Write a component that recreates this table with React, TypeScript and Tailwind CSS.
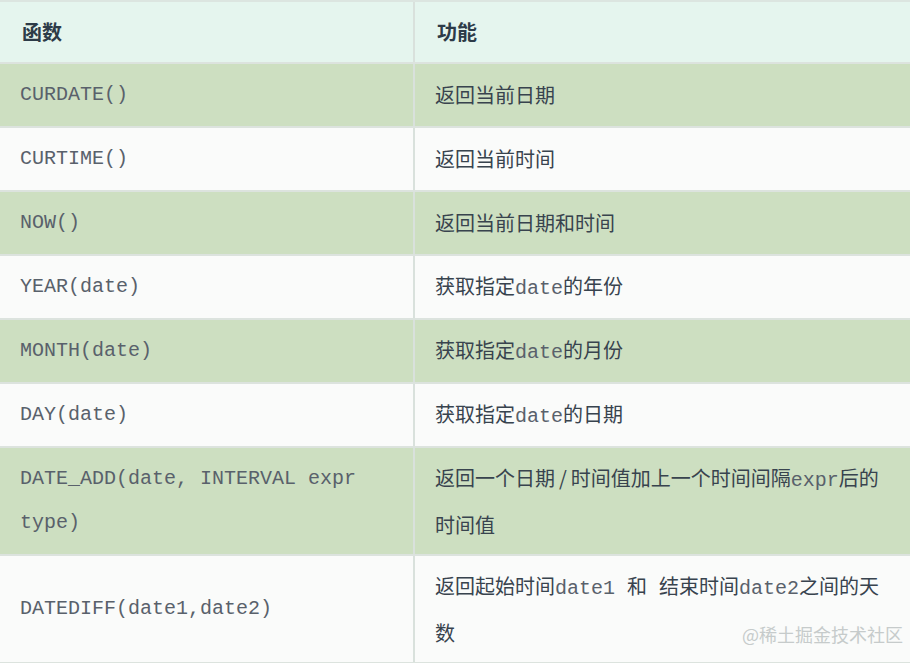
const mono = "font-['Liberation_Mono','Courier_New',monospace] text-[#59616b]";

type Row = {
  fn: string;
  desc: React.ReactNode;
  green: boolean;
  tall?: boolean;
};

const Code = ({ children }: { children: string }) => (
  <span className={mono + ' whitespace-pre'}>{children}</span>
);

const rows: Row[] = [
  { fn: 'CURDATE()', desc: '返回当前日期', green: true },
  { fn: 'CURTIME()', desc: '返回当前时间', green: false },
  { fn: 'NOW()', desc: '返回当前日期和时间', green: true },
  {
    fn: 'YEAR(date)',
    desc: (
      <>
        获取指定<Code>date</Code>的年份
      </>
    ),
    green: false,
  },
  {
    fn: 'MONTH(date)',
    desc: (
      <>
        获取指定<Code>date</Code>的月份
      </>
    ),
    green: true,
  },
  {
    fn: 'DAY(date)',
    desc: (
      <>
        获取指定<Code>date</Code>的日期
      </>
    ),
    green: false,
  },
  {
    fn: 'DATE_ADD(date, INTERVAL expr type)',
    desc: (
      <>
        返回一个日期<span className="px-[4px]">/</span>时间值加上一个时间间隔<Code>expr</Code>后的时间值
      </>
    ),
    green: true,
    tall: true,
  },
  {
    fn: 'DATEDIFF(date1,date2)',
    desc: (
      <>
        返回起始时间<Code>date1 </Code>和<Code> </Code>结束时间<Code>date2</Code>之间的天数
      </>
    ),
    green: false,
    tall: true,
  },
];

export default function App() {
  return (
    <div className="relative w-[910px] h-[663px] overflow-hidden bg-[#fafbfa] font-['Noto_Sans_CJK_SC','Noto_Sans',sans-serif] text-[20px] leading-[44px] text-[#38434e]">
      <div className="border-t-2 border-[#dce5e0]">
        <div className="flex h-[62px] border-b-2 border-[#dce3de] bg-[#e5f5ee] font-bold text-[#2d3b48]">
          <div className="w-[415px] shrink-0 border-r-2 border-[#d9e1dc] px-[22px] flex items-center">函数</div>
          <div className="flex-1 px-[22px] flex items-center">功能</div>
        </div>
        {rows.map((r) => (
          <div
            key={r.fn}
            className={[
              'flex border-b-2 border-[#dce3de] overflow-hidden',
              r.tall ? 'h-[108px]' : 'h-[64px]',
              r.green ? 'bg-[#cddfc1]' : 'bg-[#fafbfa]',
            ].join(' ')}
          >
            <div className="w-[415px] shrink-0 border-r-2 border-[#d9e1dc] px-5 flex items-center">
              <span className={mono}>{r.fn}</span>
            </div>
            <div className="flex-1 pl-5 pr-[20px] flex items-center">
              <div>{r.desc}</div>
            </div>
          </div>
        ))}
      </div>
      <div className="absolute right-[7px] bottom-[17px] text-[18px] leading-[24px] text-[#c6cbcb]">
        @稀土掘金技术社区
      </div>
    </div>
  );
}
